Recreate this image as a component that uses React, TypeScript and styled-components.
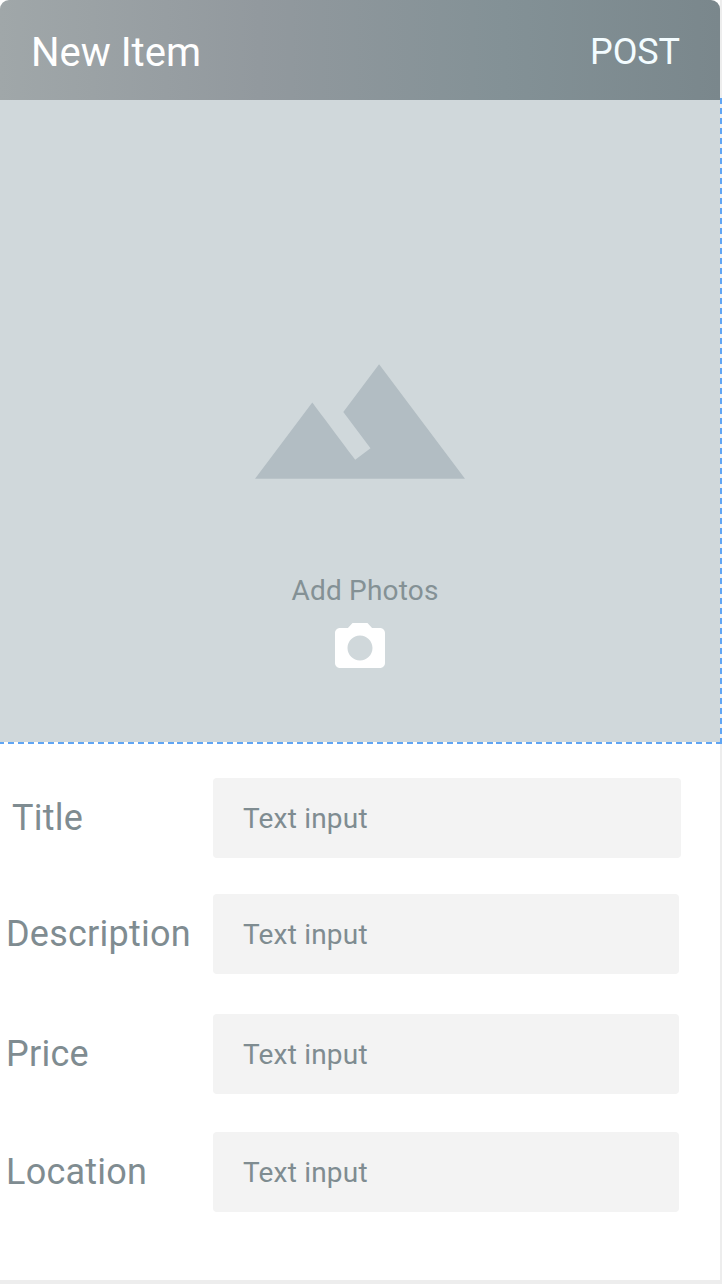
import React from "react";
import styled, { createGlobalStyle } from "styled-components";

const Global = createGlobalStyle`
  *, *::before, *::after { box-sizing: border-box; }
  body { margin: 0; background: #ededed; font-family: Roboto, "Liberation Sans", sans-serif; }
`;

const Page = styled.div`
  position: relative;
  width: 722px;
  height: 1284px;
  padding: 0 2px 4px 0;
  background: #ededed;
  overflow: hidden;
`;

const Screen = styled.main`
  height: 100%;
  display: flex;
  flex-direction: column;
  background: #fff;
`;

const Header = styled.header`
  flex: none;
  height: 100px;
  padding: 0 40px 0 31px;
  display: flex;
  align-items: center;
  justify-content: space-between;
  border-radius: 9px 9px 0 0;
  background: linear-gradient(90deg, #a0a7a9 0%, #92999e 36%, #839196 70%, #7a878c 100%);
`;

const Heading = styled.h1`
  margin: 0;
  padding-top: 6px;
  font-size: 40px;
  line-height: 48px;
  font-weight: 400;
  color: #fff;
`;

const PostButton = styled.button`
  border: 0;
  padding: 3px 0 0;
  background: none;
  font: 400 36px/44px Roboto, sans-serif;
  letter-spacing: -0.1px;
  color: #f3fcff;
`;

const PhotoDrop = styled.section`
  flex: none;
  height: 642px;
  padding-top: 207px;
  display: flex;
  flex-direction: column;
  align-items: center;
  background: #d0d8db;
`;

const AddPhotos = styled.span`
  margin: 37px 0 0 10px;
  height: 44px;
  font-size: 28px;
  line-height: 34px;
  letter-spacing: 0.2px;
  color: #849195;
`;

const Form = styled.form`
  padding-top: 36px;
  display: flex;
  flex-direction: column;
`;

const Field = styled.label<{ $gap: number; $indent: number }>`
  height: 80px;
  margin-bottom: ${(p) => p.$gap}px;
  padding-left: ${(p) => p.$indent}px;
  display: flex;
  align-items: center;
  justify-content: space-between;
`;

const FieldName = styled.span`
  font-size: 36px;
  line-height: 44px;
  letter-spacing: 0.24px;
  color: #7f8c91;
  white-space: nowrap;
`;

const TextBox = styled.span<{ $right: number }>`
  flex: none;
  width: ${(p) => 507 - p.$right}px;
  margin-right: ${(p) => p.$right}px;
  height: 80px;
  padding-left: 30px;
  display: flex;
  align-items: center;
  border-radius: 4px;
  background: #f3f3f3;
  font-size: 28px;
  letter-spacing: 0.2px;
  color: #7f8c91;
`;

const BottomDashes = styled.div`
  position: absolute;
  left: 0;
  top: 742px;
  width: 722px;
  height: 2px;
  background: repeating-linear-gradient(90deg, #60a5f3 0 6px, #fff 6px 9.969px) -1.969px 0 / 724px 2px;
`;

const SideDashes = styled.div`
  position: absolute;
  left: 720px;
  top: 98px;
  width: 2px;
  height: 646px;
  background: repeating-linear-gradient(180deg, #60a5f3 0 6px, #ededed 6px 10px);
`;

const fields = [
  { name: "Title", gap: 36, indent: 12, right: 39 },
  { name: "Description", gap: 40, indent: 6, right: 41 },
  { name: "Price", gap: 38, indent: 6, right: 41 },
  { name: "Location", gap: 0, indent: 6, right: 41 },
];

export default function App() {
  return (
    <Page>
      <Global />
      <Screen>
        <Header>
          <Heading>New Item</Heading>
          <PostButton>POST</PostButton>
        </Header>
        <PhotoDrop>
          <svg width="230" height="230" viewBox="-0.05 0 24.1 24.1" fill="#b2bdc3">
            <path d="M14 6l-3.75 5 2.85 3.8-1.6 1.2C9.81 13.75 7 10 7 10l-6 8h22L14 6z" />
          </svg>
          <AddPhotos>Add Photos</AddPhotos>
          <svg width="60" height="60" viewBox="0 0 24 24" fill="#fff">
            <path
              fillRule="evenodd"
              d="M9 2L7.17 4H4c-1.1 0-2 .9-2 2v12c0 1.1.9 2 2 2h16c1.1 0 2-.9 2-2V6c0-1.1-.9-2-2-2h-3.17L15 2H9zm3 15c-2.76 0-5-2.24-5-5s2.24-5 5-5 5 2.24 5 5-2.24 5-5 5z"
            />
          </svg>
        </PhotoDrop>
        <Form>
          {fields.map((f) => (
            <Field key={f.name} $gap={f.gap} $indent={f.indent}>
              <FieldName>{f.name}</FieldName>
              <TextBox $right={f.right}>Text input</TextBox>
            </Field>
          ))}
        </Form>
      </Screen>
      <BottomDashes />
      <SideDashes />
    </Page>
  );
}
